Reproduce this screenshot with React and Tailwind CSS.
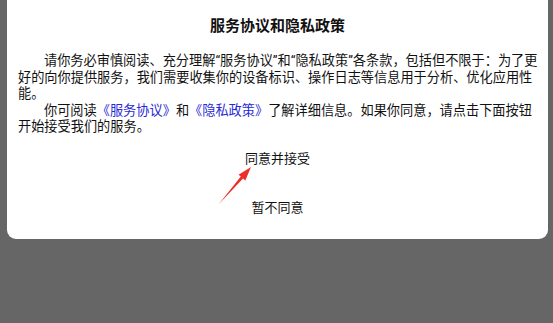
export default function App() {
  return (
    <div
      className="relative h-[323px] w-[553px] overflow-hidden bg-[#666666] pl-[7px] pr-[5px] text-[#111111]"
      style={{ fontFamily: 'Roboto, "Noto Sans CJK SC", sans-serif' }}
    >
      {/* dialog card */}
      <div className="flex h-[239px] flex-col rounded-b-[9px] bg-white">
        <h1 className="pt-[16px] text-center text-[15px] font-bold leading-[20px]">服务协议和隐私政策</h1>

        <div className="mt-[17px] pl-[11px] pr-[10px] text-[13.2px] leading-[16.6px]">
          <p className="indent-[26px]">
            请你务必审慎阅读、充分理解“服务协议”和“隐私政策”各条款，包括但不限于：为了更好的向你提供服务，我们需要收集你的设备标识、操作日志等信息用于分析、优化应用性能。
          </p>
          <p className="indent-[26px]">
            你可阅读<span className="text-[#2a2ad4]">《服务协议》</span>和<span className="text-[#2a2ad4]">《隐私政策》</span>了解详细信息。如果你同意，请点击下面按钮开始接受我们的服务。
          </p>
        </div>

        <div className="mt-[13px] flex flex-col items-center text-[13px] leading-[20px]">
          <button className="px-4">同意并接受</button>
          <button className="mt-[29px] px-4">暂不同意</button>
        </div>
      </div>

      {/* red annotation arrow */}
      <svg className="pointer-events-none absolute left-0 top-0" width="553" height="323" viewBox="0 0 553 323">
        <polygon
          points="218.5,204.5 240.8,176.6 238.5,174.7 251,167 245.3,180.5 243,178.6"
          fill="#ec2f28"
        />
      </svg>
    </div>
  );
}
